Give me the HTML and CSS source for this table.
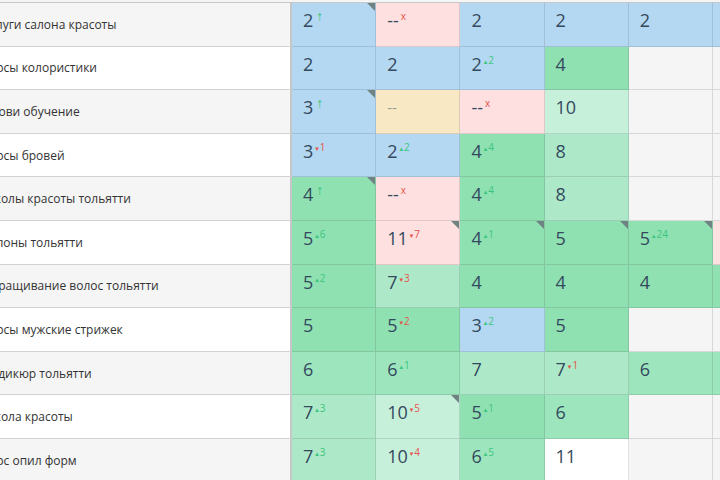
FILE: index.html
```html
<!DOCTYPE html>
<html lang="ru">
<head>
<meta charset="utf-8">
<title>Позиции</title>
<link rel="stylesheet" href="styles.css">
</head>
<body>
<div class="sheet">
  <div class="head"></div>

  <div class="row">
    <div class="label">услуги салона красоты</div>
    <div class="cell blue mark"><span class="n">2</span><sup class="s up arrow">↑</sup></div>
    <div class="cell pink"><span class="n">--</span><sup class="s dn">x</sup></div>
    <div class="cell blue"><span class="n">2</span></div>
    <div class="cell blue"><span class="n">2</span></div>
    <div class="cell blue"><span class="n">2</span></div>
    <div class="cell blue"></div>
  </div>

  <div class="row">
    <div class="label">курсы колористики</div>
    <div class="cell blue"><span class="n">2</span></div>
    <div class="cell blue"><span class="n">2</span></div>
    <div class="cell blue"><span class="n">2</span><sup class="s up"><i>▴</i>2</sup></div>
    <div class="cell g1"><span class="n">4</span></div>
    <div class="cell empty"></div>
    <div class="cell empty"></div>
  </div>

  <div class="row">
    <div class="label">брови обучение</div>
    <div class="cell blue mark"><span class="n">3</span><sup class="s up arrow">↑</sup></div>
    <div class="cell yellow"><span class="n muted">--</span></div>
    <div class="cell pink"><span class="n">--</span><sup class="s dn">x</sup></div>
    <div class="cell g4"><span class="n">10</span></div>
    <div class="cell empty"></div>
    <div class="cell empty"></div>
  </div>

  <div class="row">
    <div class="label">курсы бровей</div>
    <div class="cell blue"><span class="n">3</span><sup class="s dn"><i>▾</i>1</sup></div>
    <div class="cell blue"><span class="n">2</span><sup class="s up"><i>▴</i>2</sup></div>
    <div class="cell g1"><span class="n">4</span><sup class="s up"><i>▴</i>4</sup></div>
    <div class="cell g3"><span class="n">8</span></div>
    <div class="cell empty"></div>
    <div class="cell empty"></div>
  </div>

  <div class="row">
    <div class="label">школы красоты тольятти</div>
    <div class="cell g1 mark"><span class="n">4</span><sup class="s up arrow">↑</sup></div>
    <div class="cell pink"><span class="n">--</span><sup class="s dn">x</sup></div>
    <div class="cell g1"><span class="n">4</span><sup class="s up"><i>▴</i>4</sup></div>
    <div class="cell g3"><span class="n">8</span></div>
    <div class="cell empty"></div>
    <div class="cell empty"></div>
  </div>

  <div class="row">
    <div class="label">салоны тольятти</div>
    <div class="cell g1"><span class="n">5</span><sup class="s up"><i>▴</i>6</sup></div>
    <div class="cell pink mark"><span class="n">11</span><sup class="s dn"><i>▾</i>7</sup></div>
    <div class="cell g1 mark"><span class="n">4</span><sup class="s up"><i>▴</i>1</sup></div>
    <div class="cell g1 mark"><span class="n">5</span></div>
    <div class="cell g1 mark"><span class="n">5</span><sup class="s up"><i>▴</i>24</sup></div>
    <div class="cell pink"></div>
  </div>

  <div class="row">
    <div class="label">наращивание волос тольятти</div>
    <div class="cell g1"><span class="n">5</span><sup class="s up"><i>▴</i>2</sup></div>
    <div class="cell g3"><span class="n">7</span><sup class="s dn"><i>▾</i>3</sup></div>
    <div class="cell g1"><span class="n">4</span></div>
    <div class="cell g1"><span class="n">4</span></div>
    <div class="cell g1"><span class="n">4</span></div>
    <div class="cell g1"></div>
  </div>

  <div class="row">
    <div class="label">курсы мужские стрижек</div>
    <div class="cell g1"><span class="n">5</span></div>
    <div class="cell g1"><span class="n">5</span><sup class="s dn"><i>▾</i>2</sup></div>
    <div class="cell blue"><span class="n">3</span><sup class="s up"><i>▴</i>2</sup></div>
    <div class="cell g1"><span class="n">5</span></div>
    <div class="cell empty"></div>
    <div class="cell empty"></div>
  </div>

  <div class="row">
    <div class="label">педикюр тольятти</div>
    <div class="cell g2"><span class="n">6</span></div>
    <div class="cell g2"><span class="n">6</span><sup class="s up"><i>▴</i>1</sup></div>
    <div class="cell g3"><span class="n">7</span></div>
    <div class="cell g3"><span class="n">7</span><sup class="s dn"><i>▾</i>1</sup></div>
    <div class="cell g2"><span class="n">6</span></div>
    <div class="cell g2"></div>
  </div>

  <div class="row">
    <div class="label">школа красоты</div>
    <div class="cell g3"><span class="n">7</span><sup class="s up"><i>▴</i>3</sup></div>
    <div class="cell g4 mark"><span class="n">10</span><sup class="s dn"><i>▾</i>5</sup></div>
    <div class="cell g1"><span class="n">5</span><sup class="s up"><i>▴</i>1</sup></div>
    <div class="cell g2"><span class="n">6</span></div>
    <div class="cell empty"></div>
    <div class="cell empty"></div>
  </div>

  <div class="row">
    <div class="label">курс опил форм</div>
    <div class="cell g3"><span class="n">7</span><sup class="s up"><i>▴</i>3</sup></div>
    <div class="cell g4"><span class="n">10</span><sup class="s dn"><i>▾</i>4</sup></div>
    <div class="cell g2"><span class="n">6</span><sup class="s up"><i>▴</i>5</sup></div>
    <div class="cell white"><span class="n">11</span></div>
    <div class="cell empty"></div>
    <div class="cell empty"></div>
  </div>
</div>
</body>
</html>
```

FILE: styles.css
```css
* { box-sizing: border-box; }

html, body {
  margin: 0;
  padding: 0;
  background: #ffffff;
  overflow: hidden;
  width: 720px;
  height: 480px;
}

.sheet {
  margin-left: -24px;
  width: 900px;
  font-family: "Open Sans", "Liberation Sans", sans-serif;
}

.head {
  height: 3px;
  background: #f5f5f5;
  border-bottom: 1px solid #c8c8c8;
}

.row {
  display: grid;
  grid-template-columns: 316px repeat(6, 84.2px);
  height: 43.6px;
}

.row:nth-child(even) .label { background: #f5f5f5; }
.row:nth-child(odd) .label { background: #ffffff; }

.label {
  display: flex;
  align-items: center;
  padding-left: 8px;
  border-right: 2px solid #c6c6c6;
  border-bottom: 1px solid #d2d2d2;
  font-size: 12px;
  color: #333333;
  white-space: nowrap;
  overflow: hidden;
}

.cell {
  position: relative;
  padding: 4px 0 0 11px;
  border-right: 1px solid rgba(60, 70, 80, 0.16);
  border-bottom: 1px solid rgba(60, 70, 80, 0.16);
  white-space: nowrap;
  line-height: 26px;
}

.n {
  font-size: 18px;
  color: #34495e;
}
.n.muted { color: #9a9a9a; font-size: 15px; }

.s {
  display: inline-block;
  vertical-align: 7px;
  margin-left: 2px;
  font-size: 10px;
  line-height: 10px;
}
.s i {
  font-style: normal;
  font-family: "DejaVu Sans", sans-serif;
  font-size: 7px;
  margin-right: 1px;
}
.s.arrow {
  font-family: "DejaVu Sans", sans-serif;
  font-size: 11px;
  line-height: 11px;
  vertical-align: 6px;
  transform: scaleX(0.7);
}
.s.up { color: #3cc57d; }
.s.dn { color: #e5534b; }

.mark::after {
  content: "";
  position: absolute;
  top: 0;
  right: 0;
  border-top: 8px solid #6f8383;
  border-left: 8px solid transparent;
}

.blue { background: #b4d8f1; }
.pink { background: #fde0df; }
.yellow { background: #f8e8c4; }
.g1 { background: #8fe1b2; }
.g2 { background: #9de6bd; }
.g3 { background: #ade9c8; }
.g4 { background: #c7f0db; }
.white { background: #ffffff; }
.empty { background: #f5f5f5; }
```
